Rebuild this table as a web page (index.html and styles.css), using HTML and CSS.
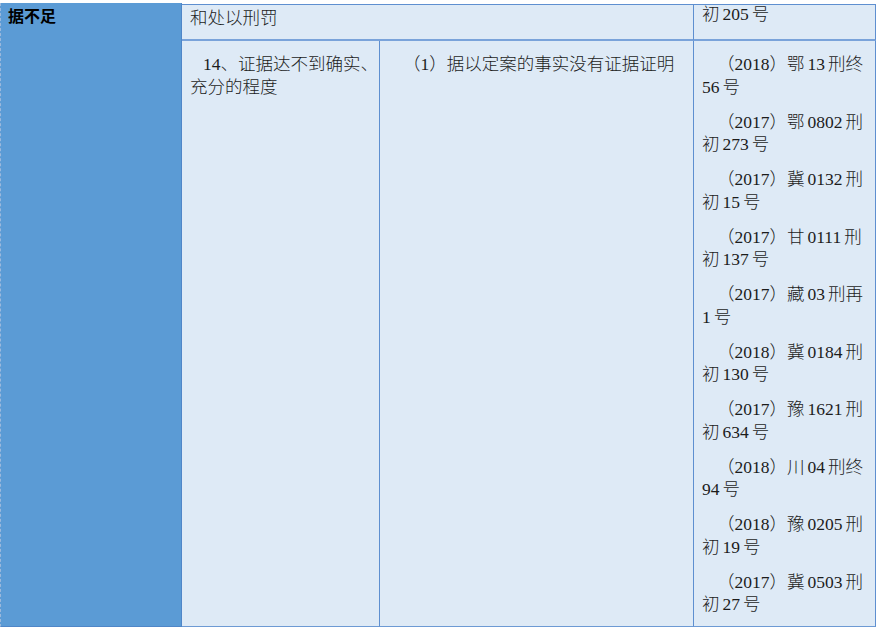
FILE: index.html
```html
<!DOCTYPE html>
<html lang="zh-CN">
<head>
<meta charset="utf-8">
<title>表格</title>
<link rel="stylesheet" href="styles.css">
</head>
<body>
<div class="page">
  <div class="sheet">
    <div class="cell head">据不足</div>
    <div class="cell r1 merged">和处以刑罚</div>
    <div class="cell r1 c4 first">初<span class="n">205</span>号</div>

    <div class="cell r2 c2">
      <p class="t2">14、证据达不到确实、<br>充分的程度</p>
    </div>
    <div class="cell r2 c3">
      <p class="t3">（1）据以定案的事实没有证据证明</p>
    </div>
    <div class="cell r2 c4">
      <p class="ref">（2018）鄂<span class="n">13</span>刑终<br><span class="s">56</span>号</p>
      <p class="ref">（2017）鄂<span class="n">0802</span>刑<br>初<span class="n">273</span>号</p>
      <p class="ref">（2017）冀<span class="n">0132</span>刑<br>初<span class="n">15</span>号</p>
      <p class="ref">（2017）甘<span class="n">0111</span>刑<br>初<span class="n">137</span>号</p>
      <p class="ref">（2017）藏<span class="n">03</span>刑再<br><span class="s">1</span>号</p>
      <p class="ref">（2018）冀<span class="n">0184</span>刑<br>初<span class="n">130</span>号</p>
      <p class="ref">（2017）豫<span class="n">1621</span>刑<br>初<span class="n">634</span>号</p>
      <p class="ref">（2018）川<span class="n">04</span>刑终<br><span class="s">94</span>号</p>
      <p class="ref">（2018）豫<span class="n">0205</span>刑<br>初<span class="n">19</span>号</p>
      <p class="ref">（2017）冀<span class="n">0503</span>刑<br>初<span class="n">27</span>号</p>
    </div>
  </div>
</div>
</body>
</html>
```
FILE: styles.css
```css
html, body {
  margin: 0;
  padding: 0;
  background: #ffffff;
}

.page {
  padding-top: 3px;
}

.sheet {
  display: grid;
  grid-template-columns: 182px 198px 314px 182px;
  grid-template-rows: 38px 586px;
  width: 876px;
  font-family: "Liberation Serif", "Noto Sans CJK SC", serif;
  font-size: 17.5px;
  font-weight: 300;
  color: #1c1c1c;
}

.cell {
  box-sizing: border-box;
  background: #deeaf6;
  border-right: 1px solid #5e8fd0;
  padding: 0 8px;
  white-space: nowrap;
  overflow: hidden;
}

.head {
  grid-column: 1;
  grid-row: 1 / 3;
  background: #5b9bd5;
  border-left: 1px dashed #9cb9dc;
  border-right: 1px solid #4f86c8;
  border-bottom: 1px solid #4f86c8;
  padding: 0 7px;
  font-family: "Noto Sans CJK SC", sans-serif;
  font-weight: 700;
  font-size: 16px;
  line-height: 24px;
  color: #000000;
}

.r1 {
  grid-row: 1;
  margin-top: 1px;
  border-top: 1px solid #5e8fd0;
  border-bottom: 2px solid #7aa3da;
  line-height: 23px;
}

.merged {
  grid-column: 2 / 4;
  padding-top: 2px;
}

.c4.first {
  grid-column: 4;
  line-height: 19px;
}

.r2 {
  grid-row: 2;
  border-bottom: 1px solid #6d9ad4;
  padding-top: 12px;
}

.c2 { grid-column: 2; }
.c3 { grid-column: 3; }
.c4 { grid-column: 4; }

p {
  margin: 0;
  line-height: 22.5px;
}

.t2 { text-indent: 13px; }
.t3 { text-indent: 15px; }

.ref {
  text-indent: 15px;
  margin-bottom: 12.5px;
}

.ref:last-child {
  margin-bottom: 0;
}

.n {
  margin: 0 3px;
}

.s {
  margin-right: 3px;
}
```
